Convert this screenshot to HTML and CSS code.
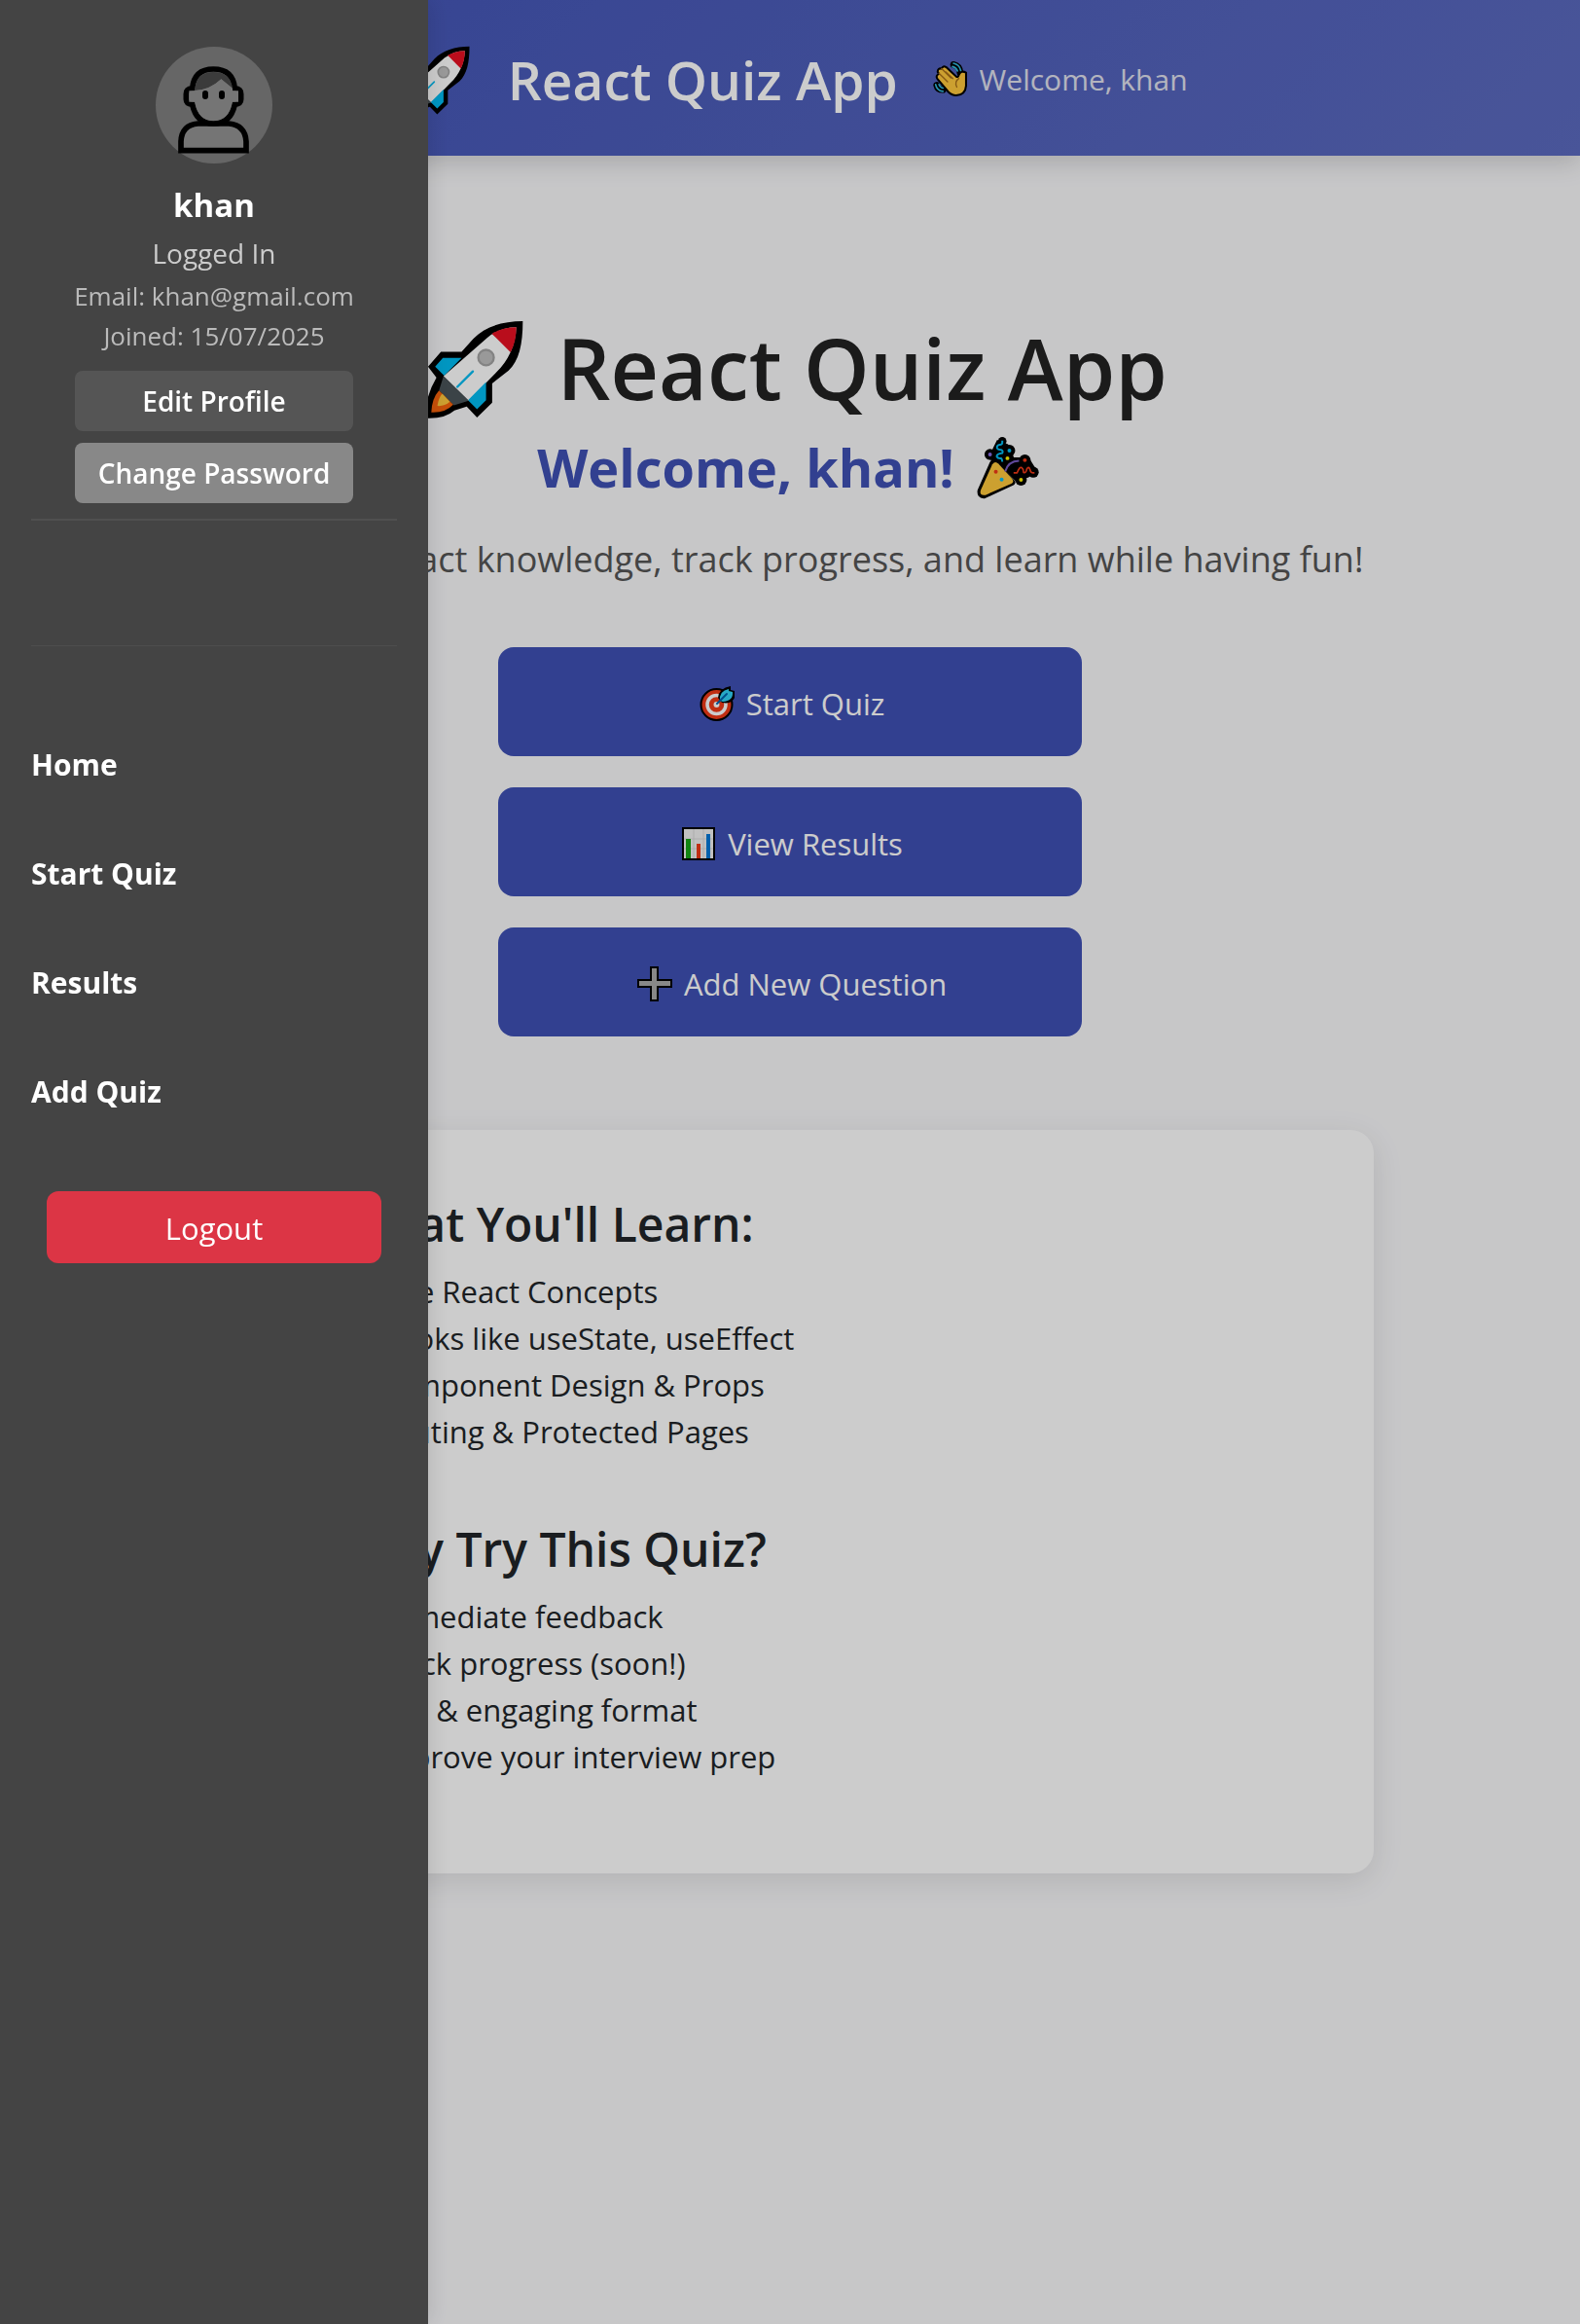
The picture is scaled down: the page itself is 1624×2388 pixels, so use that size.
FILE: index.html
```html
<!DOCTYPE html>
<html lang="en">
<head>
<meta charset="utf-8">
<title>React Quiz App</title>
<link rel="stylesheet" href="styles.css">
</head>
<body>
<svg class="sprite" aria-hidden="true">
  <symbol id="rocket" viewBox="18 54 308 308">
    <path fill="#000" d="M324 57C324 130 312 180 280 210L229 250V310L182 356L150 322L112 334Q80 362 19 358Q22 290 56 232L30 198L70 152H134L170 112C205 75 260 57 324 57Z"/>
    <path fill="#fff" d="M304 76Q255 76 214 108L78 228L156 304L240 218Q300 160 304 76Z"/>
    <path fill="#e81123" d="M304 76Q262 76 228 96L286 154Q304 120 304 76Z"/>
    <path fill="#00bcf2" d="M76 171H134L80 226L52 198ZM210 246V302L182 330L154 302Z"/>
    <path fill="#4a5459" d="M78 228L156 304L110 318L64 272Z"/>
    <path fill="#f7630c" d="M64 272L108 316Q84 342 40 340Q42 296 64 272Z"/>
    <path fill="#ffc83d" d="M74 282L98 307Q80 322 59 320Q62 296 74 282Z"/>
    <circle cx="210" cy="170" r="24" fill="#c0c0c0" stroke="#a4a4a4" stroke-width="7"/>
    <path stroke="#00bcf2" stroke-width="7" stroke-linecap="round" d="M169 213L121 261"/>
  </symbol>
  <symbol id="party" viewBox="126 84 196 196">
    <path fill="#000" stroke="#000" stroke-width="18" stroke-linejoin="round" d="M186 170L239 228L151 269Q138 268 140 254L178 168Z"/>
    <g fill="#000"><circle cx="208" cy="100" r="13"/><circle cx="230" cy="129" r="18"/><circle cx="170" cy="141" r="17"/><circle cx="278" cy="159" r="18"/><circle cx="304" cy="196" r="17"/><circle cx="266" cy="220" r="18"/><path d="M192 96L226 110L244 150L290 150L312 186L290 212L250 225L190 165L164 155L180 120Z"/></g>
    <path fill="#ffc83d" d="M177 172Q186 160 196 170L238 216Q246 226 236 232L156 267Q136 270 141 252Z"/>
    <path fill="none" stroke="#00bcf2" stroke-width="6" d="M208 98V105Q208 110 200 111Q190 113 192 121Q194 127 204 127Q212 130 208 137Q190 140 191 148Q194 154 204 153Q208 156 208 164"/>
    <path fill="none" stroke="#7a5cc4" stroke-width="6" d="M217 194Q226 162 260 161"/>
    <path fill="none" stroke="#f03a17" stroke-width="5" stroke-linejoin="round" d="M243 198H254Q262 178 268 182T274 197Q282 200 284 186Q290 176 294 188Q296 200 308 198"/>
    <g fill="#f03a17"><circle cx="188" cy="195" r="6"/><circle cx="278" cy="159" r="6"/></g>
    <g fill="#00bcf2"><circle cx="206" cy="219" r="6"/><circle cx="230" cy="129" r="6"/></g>
    <g fill="#fff100"><circle cx="224" cy="153" r="6"/><circle cx="266" cy="220" r="6"/></g>
    <circle cx="170" cy="141" r="6" fill="#886ce4"/>
  </symbol>
  <symbol id="wave" viewBox="28 30 106 106">
    <g fill="none" stroke="#000" stroke-width="20" stroke-linecap="round"><path d="M90 40Q108 44 110 64"/><path d="M39 102Q42 116 58 116"/></g>
    <path fill="#ffc83d" stroke="#000" stroke-width="6" stroke-linejoin="round" d="M42 84Q34 74 46 68L42 62Q42 50 54 52Q58 42 68 48L98 76Q104 80 106 72Q112 56 128 64V104Q126 132 98 133Q84 133 74 122Z"/>
    <g fill="none" stroke="#31b8dc" stroke-width="5" stroke-linecap="round"><path d="M90 36Q108 40 112 58M87 46Q98 49 102 59"/><path d="M36 100Q39 118 58 121M46 100Q49 109 58 111"/></g>
    <path fill="none" stroke="#a8701a" stroke-width="4" stroke-linecap="round" d="M54 52L82 80M46 66L72 92M66 62L88 82M106 82Q92 92 100 108"/>
  </symbol>
  <symbol id="target" viewBox="0 0 36 36">
    <circle cx="17.500" cy="19" r="16" fill="#f03a17" stroke="#000" stroke-width="2"/>
    <circle cx="17.500" cy="19" r="9.500" fill="none" stroke="#fff" stroke-width="3.500"/>
    <circle cx="17.500" cy="19" r="3" fill="#fff"/>
    <path fill="#000" d="M19 12Q20 2 32 0V4L36 5V12Q33 19 23 17Z"/>
    <path fill="#31d2f7" d="M21 15Q20 5 30 3V5L34 6Q35 15 24 16Z"/>
    <path stroke="#0063b1" stroke-width="2" stroke-linecap="round" d="M18 18L28 8"/>
  </symbol>
  <symbol id="chart" viewBox="0 0 36 36">
    <path fill="#f2f2f2" stroke="#000" stroke-width="2" d="M2 2H34V34H2Z"/>
    <path stroke="#d8d8d8" d="M3 13H33M3 23H33M13 3V33M23 3V33"/>
    <path fill="#16a716" d="M5 13H10V33H5Z"/><path fill="#f03a17" d="M16 18H20V33H16Z"/><path fill="#0078d7" d="M26 8H30V33H26Z"/>
  </symbol>
  <symbol id="plus" viewBox="0 0 36 36">
    <path fill="#aaa" stroke="#000" stroke-width="2" d="M14 1H21V14H35V21H21V35H14V21H1V14H14Z"/>
  </symbol>
  <symbol id="check" viewBox="0 0 36 36">
    <path fill="#16c60c" stroke="#000" stroke-width="2" d="M2 2H34V34H2Z"/><path fill="none" stroke="#fff" stroke-width="4" d="M8 18L15 25L28 11"/>
  </symbol>
</svg>

<div class="page">
  <header class="topbar">
    <div class="brand"><svg class="emoji"><use href="#rocket"/></svg> React Quiz App</div>
    <p class="greeting"><svg class="emoji"><use href="#wave"/></svg> Welcome, khan</p>
  </header>
  <main class="content">
    <h1 class="title"><svg class="emoji"><use href="#rocket"/></svg> React Quiz App</h1>
    <h2 class="welcome">Welcome, khan! <svg class="emoji"><use href="#party"/></svg></h2>
    <p class="lead">Test your React knowledge, track progress, and learn while having fun!</p>
    <div class="actions">
      <button class="action" type="button"><svg class="emoji"><use href="#target"/></svg> Start Quiz</button>
      <button class="action" type="button"><svg class="emoji"><use href="#chart"/></svg> View Results</button>
      <button class="action" type="button"><svg class="emoji"><use href="#plus"/></svg> Add New Question</button>
    </div>
    <section class="card">
      <h3 class="card-title"><svg class="emoji"><use href="#target"/></svg> What You'll Learn:</h3>
      <ul class="points">
        <li><svg class="emoji emoji-narrow"><use href="#check"/></svg> Core React Concepts</li>
        <li><svg class="emoji"><use href="#check"/></svg> Hooks like useState, useEffect</li>
        <li><svg class="emoji"><use href="#check"/></svg> Component Design &amp; Props</li>
        <li><svg class="emoji"><use href="#check"/></svg> Routing &amp; Protected Pages</li>
      </ul>
      <h3 class="card-title"><svg class="emoji"><use href="#rocket"/></svg> Why Try This Quiz?</h3>
      <ul class="points">
        <li><svg class="emoji"><use href="#check"/></svg> Immediate feedback</li>
        <li><svg class="emoji"><use href="#check"/></svg> Track progress (soon!)</li>
        <li><svg class="emoji"><use href="#check"/></svg> Fun &amp; engaging format</li>
        <li><svg class="emoji"><use href="#check"/></svg> Improve your interview prep</li>
      </ul>
    </section>
  </main>
</div>

<div class="overlay"></div>

<aside class="sidebar">
  <div class="profile">
    <svg class="avatar" viewBox="480 144 360 360" role="img" aria-label="Avatar">
      <circle cx="660" cy="324" r="180" fill="#666"/>
      <path fill="#757575" stroke="#000" stroke-width="17" d="M558 464V436Q560 386 610 381H706Q756 386 759 436V464Z"/>
      <path fill="#666" stroke="#000" stroke-width="17" d="M593 272Q574 274 574 290V306Q574 320 593 322Q606 381 658 381Q711 381 724 322Q743 320 743 306V290Q743 274 724 272Q718 213 658 213Q599 213 593 272Z"/>
      <path fill="#757575" d="M583 280H735V314H716Q706 372 658 372Q611 372 601 314H583Z"/>
      <path fill="#3b3b3b" d="M601 279Q603 222 658 222Q710 222 717 272L682 244Q646 278 601 279Z"/>
      <path fill="#757575" d="M601 279Q646 278 682 244L717 272V290H601Z"/>
      <rect x="624" y="279" width="18" height="27" rx="9"/><rect x="675" y="279" width="18" height="27" rx="9"/>
    </svg>
    <strong class="name">khan</strong>
    <span class="status">Logged In</span>
    <span class="meta">Email: khan@gmail.com</span>
    <span class="meta">Joined: 15/07/2025</span>
    <div class="profile-actions">
      <button class="small-btn" type="button">Edit Profile</button>
      <button class="small-btn small-btn-light" type="button">Change Password</button>
    </div>
  </div>
  <nav class="menu">
    <a href="#home">Home</a>
    <a href="#quiz">Start Quiz</a>
    <a href="#results">Results</a>
    <a href="#add">Add Quiz</a>
  </nav>
  <button class="logout" type="button">Logout</button>
</aside>
</body>
</html>
```
FILE: styles.css
```css
* { box-sizing: border-box; }
body {
  margin: 0;
  background: #f9f9fb;
  color: #212529;
  font: 400 31px/48px "Open Sans", "Noto Sans", sans-serif;
}
h1, h2, h3, p, ul { margin: 0; padding: 0; }
button { border: 0; font: inherit; cursor: pointer; }
.sprite { position: absolute; width: 0; height: 0; }
.emoji { width: 36px; height: 36px; margin: 0 4px; vertical-align: -6px; }
.emoji-narrow { width: 28px; }

.page { min-height: 100vh; }
.topbar {
  display: flex;
  justify-content: center;
  align-items: center;
  gap: 32px;
  height: 160px;
  padding-top: 4px;
  background: linear-gradient(135deg, #3f51b5, #5c6bc0);
  box-shadow: 0 8px 24px rgba(0, 0, 0, .15);
  color: #fff;
}
.brand { font-size: 55px; font-weight: 600; line-height: 80px; }
.brand .emoji { width: 72px; height: 72px; margin: 0 24px 0 8px; vertical-align: -16px; }
.greeting { color: #e0e2ee; font-size: 30px; }

.content {
  display: flex;
  flex-direction: column;
  align-items: center;
  padding: 158px 48px 64px;
}
.title { color: #222; font-size: 86px; font-weight: 600; line-height: 120px; }
.title .emoji { width: 102px; height: 102px; margin: 0 12px; vertical-align: -20px; }
.welcome { margin-top: 2px; color: #3f51b5; font-size: 54px; font-weight: 700; line-height: 80px; }
.welcome .emoji { width: 65px; height: 65px; vertical-align: -12px; margin: 0 4px 0 8px; }
.lead { margin-top: 25px; color: #555; font-size: 36px; line-height: 60px; }
.actions {
  display: grid;
  gap: 32px;
  width: 100%;
  max-width: 600px;
  margin: 60px 0 96px;
}
.action {
  padding: 34px 32px 30px;
  border-radius: 16px;
  background: #3f51b5;
  color: #fff;
}
.card {
  width: 100%;
  max-width: 1200px;
  padding: 62px 48px 64px;
  border-radius: 24px;
  background: #fff;
  box-shadow: 0 8px 32px rgba(0, 0, 0, .1);
}
.card-title { margin-bottom: 10px; font-size: 48px; font-weight: 600; line-height: 70px; }
.card-title .emoji { width: 58px; height: 58px; margin: 0 12px; vertical-align: -12px; }
.points { margin-bottom: 32px; padding-left: 74px; list-style: none; }
.points + .card-title { margin-top: 62px; }

.overlay { position: fixed; inset: 0; background: rgba(0, 0, 0, .2); }

.sidebar {
  position: fixed;
  inset: 0 auto 0 0;
  display: flex;
  flex-direction: column;
  width: 440px;
  padding: 48px 32px;
  background: #444;
  box-shadow: 4px 0 20px rgba(0, 0, 0, .1);
  color: #fff;
}
.profile {
  display: flex;
  flex-direction: column;
  align-items: center;
  padding-bottom: 16px;
  border-bottom: 2px solid #505050;
}
.avatar { width: 120px; height: 120px; margin-bottom: 18px; }
.name { font-size: 33px; font-weight: 700; line-height: 50px; }
.status { color: #ccc; font-size: 28px; line-height: 48px; }
.meta { color: #bbb; font-size: 26px; line-height: 41px; }
.profile-actions { display: grid; gap: 12px; margin-top: 15px; }
.small-btn {
  padding: 7px 24px;
  border-radius: 8px;
  background: #555;
  color: #fff;
  font-size: 28px;
  font-weight: 600;
}
.small-btn-light { background: #888; }
.menu {
  display: flex;
  flex-direction: column;
  gap: 64px;
  margin-top: 128px;
  padding-top: 98px;
  border-top: 1px solid #4d4d4d;
}
.menu a { color: #fff; font-size: 30px; font-weight: 700; text-decoration: none; }
.logout {
  margin: 78px 16px 0;
  padding: 14px 14px 12px;
  border-radius: 12px;
  background: #dc3545;
  color: #fff;
}
```
